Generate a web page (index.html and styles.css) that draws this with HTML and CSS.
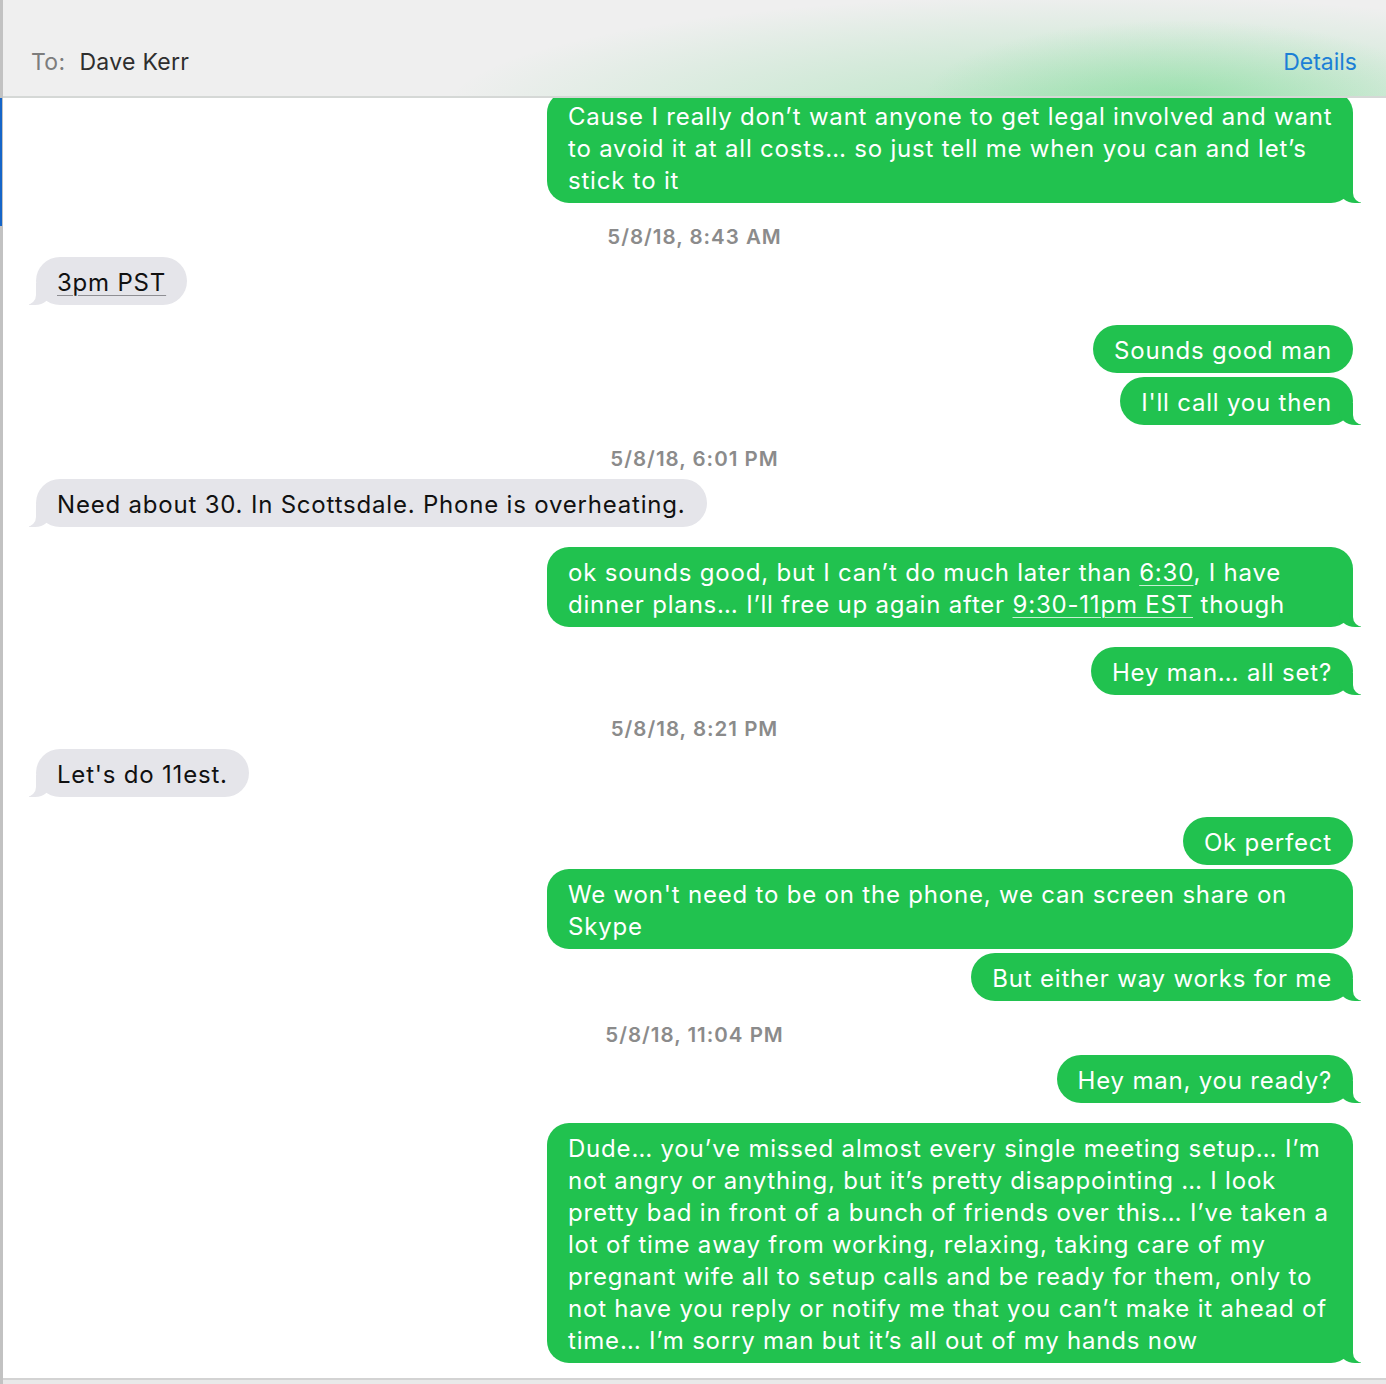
FILE: index.html
```html
<!DOCTYPE html>
<html lang="en">
<head>
<meta charset="utf-8">
<title>Messages – Dave Kerr</title>
<link rel="stylesheet" href="styles.css">
</head>
<body>
<div class="app">
  <div class="edge"><div class="edge-active"></div></div>
  <div class="main">
    <header class="header">
      <div class="to"><span class="to-label">To:</span><span class="to-name">Dave Kerr</span></div>
      <a class="details">Details</a>
    </header>
    <div class="thread">
      <div class="msg out wide tail">Cause I really don’t want anyone to get legal involved and want<br>to avoid it at all costs… so just tell me when you can and let’s<br>stick to it</div>
      <div class="stamp">5/8/18, 8:43 AM</div>
      <div class="msg in tail"><span class="link">3pm PST</span></div>
      <div class="msg out gap">Sounds good man</div>
      <div class="msg out tight tail">I'll call you then</div>
      <div class="stamp">5/8/18, 6:01 PM</div>
      <div class="msg in tail">Need about 30. In Scottsdale. Phone is overheating.</div>
      <div class="msg out wide gap tail">ok sounds good, but I can’t do much later than <span class="link">6:30</span>, I have<br>dinner plans… I’ll free up again after <span class="link">9:30-11pm EST</span> though</div>
      <div class="msg out gap tail">Hey man… all set?</div>
      <div class="stamp">5/8/18, 8:21 PM</div>
      <div class="msg in tail">Let's do 11est.</div>
      <div class="msg out gap">Ok perfect</div>
      <div class="msg out wide tight">We won't need to be on the phone, we can screen share on<br>Skype</div>
      <div class="msg out tight tail">But either way works for me</div>
      <div class="stamp">5/8/18, 11:04 PM</div>
      <div class="msg out tail">Hey man, you ready?</div>
      <div class="msg out wide gap tail">Dude… you’ve missed almost every single meeting setup… I’m<br>not angry or anything, but it’s pretty disappointing … I look<br>pretty bad in front of a bunch of friends over this… I’ve taken a<br>lot of time away from working, relaxing, taking care of my<br>pregnant wife all to setup calls and be ready for them, only to<br>not have you reply or notify me that you can’t make it ahead of<br>time… I’m sorry man but it’s all out of my hands now</div>
    </div>
    <div class="footer"></div>
  </div>
</div>
</body>
</html>
```

FILE: styles.css
```css
html, body {
  margin: 0;
  padding: 0;
  background: #ffffff;
}

.app {
  display: flex;
  width: 1386px;
  height: 1384px;
  overflow: hidden;
  font-family: Inter, "Noto Sans", "Liberation Sans", sans-serif;
}

.edge {
  width: 3px;
  flex: none;
  background: #c2c2c2;
}

.edge-active {
  margin-top: 98px;
  height: 128px;
  width: 2px;
  background: #1565c8;
}

.main {
  flex: 1;
  display: flex;
  flex-direction: column;
  position: relative;
  min-width: 0;
}

.header {
  position: absolute;
  top: 0;
  left: 0;
  right: 0;
  height: 98px;
  z-index: 2;
  display: flex;
  align-items: flex-end;
  justify-content: space-between;
  padding: 0 29px 20px 28px;
  box-sizing: border-box;
  border-bottom: 2px solid #d5d8d6;
  background:
    radial-gradient(ellipse 260px 80px at 1180px 100px, rgba(60, 210, 100, 0.30), rgba(60, 210, 100, 0) 100%),
    radial-gradient(ellipse 640px 115px at 1080px 110px, rgba(60, 205, 100, 0.30), rgba(60, 205, 100, 0) 100%),
    #efefef;
}

.to {
  font-size: 23px;
  line-height: 28px;
  letter-spacing: 0.3px;
}

.to-label {
  color: #7d7d7d;
  margin-right: 14px;
}

.to-name {
  color: #2e2e2e;
}

.details {
  font-size: 23px;
  line-height: 28px;
  color: #1c7fd6;
}

.thread {
  flex: 1;
  overflow: hidden;
  padding: 91px 33px 0 33px;
  display: flex;
  flex-direction: column;
}

.msg {
  position: relative;
  max-width: 806px;
  box-sizing: border-box;
  padding: 10px 21px 6px;
  border-radius: 24px;
  font-size: 24px;
  line-height: 32px;
  letter-spacing: 0.8px;
  white-space: nowrap;
}

.msg.in {
  align-self: flex-start;
  background: #e5e5ea;
  color: #111111;
}

.msg.out {
  align-self: flex-end;
  background: #21c24f;
  color: #ffffff;
}

.msg.wide {
  width: 806px;
  border-radius: 22px;
}

.msg.gap {
  margin-top: 20px;
}

.msg.tight {
  margin-top: 4px;
}

.msg.in + .msg.out,
.msg.out + .msg.in {
  margin-top: 20px;
}

/* Bubble tails */
.msg.tail::before,
.msg.tail::after {
  content: "";
  position: absolute;
  bottom: 0;
  height: 22px;
}

.msg.out.tail::before {
  right: -8px;
  width: 22px;
  background: #21c24f;
  border-bottom-left-radius: 16px 14px;
}

.msg.out.tail::after {
  right: -12px;
  width: 12px;
  background: #ffffff;
  border-bottom-left-radius: 10px;
}

.msg.in.tail::before {
  left: -7px;
  width: 22px;
  background: #e5e5ea;
  border-bottom-right-radius: 16px 14px;
}

.msg.in.tail::after {
  left: -12px;
  width: 12px;
  background: #ffffff;
  border-bottom-right-radius: 10px;
}

.link {
  text-decoration: underline;
  text-decoration-thickness: 1px;
  text-underline-offset: 4px;
}

.msg.in .link {
  text-decoration-color: #8e8e93;
}

.msg.out .link {
  text-decoration-color: rgba(255, 255, 255, 0.75);
}

.stamp {
  align-self: center;
  margin: 22px 0 8px;
  font-size: 20.5px;
  line-height: 24px;
  letter-spacing: 1px;
  font-weight: 600;
  color: #8b8b8b;
}

.footer {
  flex: none;
  height: 4px;
  border-top: 2px solid #d3d3d3;
  background: #e9e9e9;
}
```
